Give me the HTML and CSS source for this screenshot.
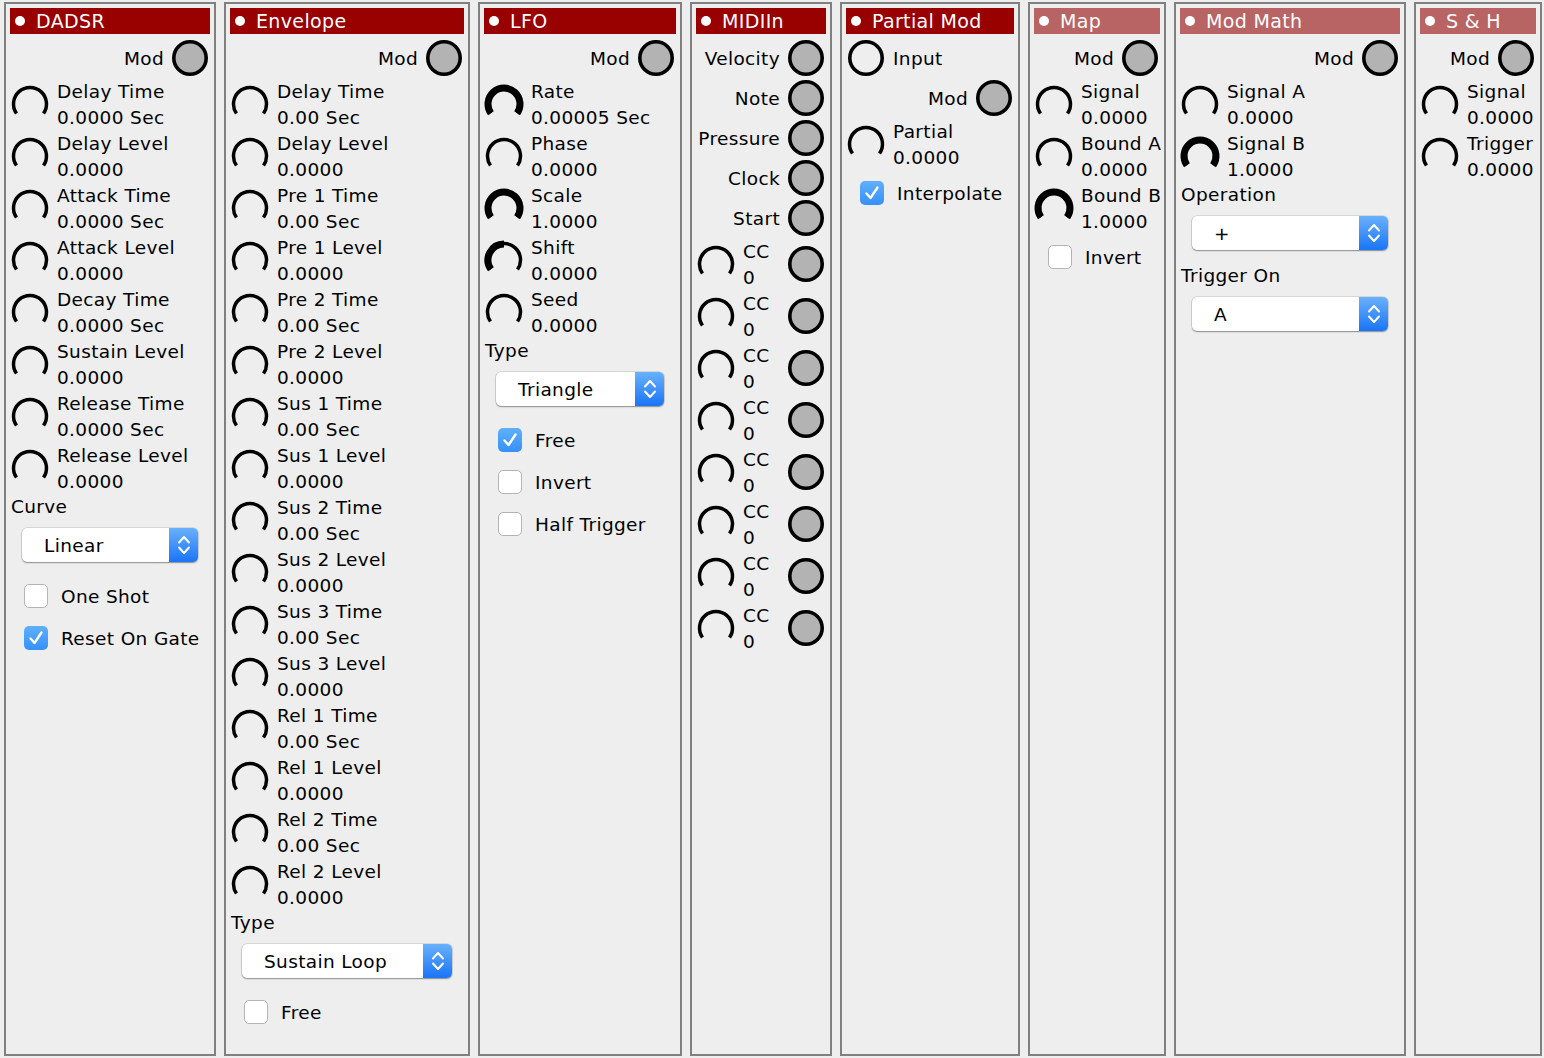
FILE: index.html
```html
<!DOCTYPE html>
<html>
<head>
<meta charset="utf-8">
<link rel="stylesheet" href="styles.css">
</head>
<body>
<svg class="defs" width="0" height="0">
  <defs>
    <symbol id="k0" viewBox="0 0 36 36" overflow="visible">
      <path d="M4.49 27.47 A16.5 16.5 0 1 1 31.51 27.47" fill="none" stroke="#000" stroke-width="3.5"/>
    </symbol>
    <symbol id="k1" viewBox="0 0 36 36" overflow="visible">
      <path d="M4.49 27.47 A16.5 16.5 0 1 1 31.51 27.47" fill="none" stroke="#000" stroke-width="3.5"/>
      <path d="M4.89 27.18 A16 16 0 1 1 31.11 27.18" fill="none" stroke="#000" stroke-width="7"/>
    </symbol>
    <symbol id="kh" viewBox="0 0 36 36" overflow="visible">
      <path d="M4.49 27.47 A16.5 16.5 0 1 1 31.51 27.47" fill="none" stroke="#000" stroke-width="3.5"/>
      <path d="M4.89 27.18 A16 16 0 0 1 18 2" fill="none" stroke="#000" stroke-width="7"/>
    </symbol>
    <symbol id="jk" viewBox="0 0 36 36">
      <circle cx="18" cy="18" r="16.2" fill="#b3b3b3" stroke="#000" stroke-width="3.6"/>
    </symbol>
    <symbol id="jo" viewBox="0 0 36 36">
      <circle cx="18" cy="18" r="16.2" fill="none" stroke="#000" stroke-width="3.6"/>
    </symbol>
    <symbol id="chev" viewBox="0 0 14 24">
      <path d="M2 9.5 L7 4 L12 9.5 M2 14.5 L7 20 L12 14.5" fill="none" stroke="#fff" stroke-width="2" stroke-linecap="round" stroke-linejoin="round"/>
    </symbol>
    <symbol id="tick" viewBox="0 0 24 24">
      <path d="M6.5 12.5 L10.5 17 L17.5 6.5" fill="none" stroke="#fff" stroke-width="2.4" stroke-linecap="round" stroke-linejoin="round"/>
    </symbol>
  </defs>
</svg>

<div class="panel w-dadsr">
  <div class="head"><span class="dot"></span>DADSR</div>
  <div class="modrow"><span>Mod</span><svg class="jack"><use href="#jk"/></svg></div>
  <div class="krow"><svg class="knob"><use href="#k0"/></svg><div class="kl"><div>Delay Time</div><div>0.0000 Sec</div></div></div>
  <div class="krow"><svg class="knob"><use href="#k0"/></svg><div class="kl"><div>Delay Level</div><div>0.0000</div></div></div>
  <div class="krow"><svg class="knob"><use href="#k0"/></svg><div class="kl"><div>Attack Time</div><div>0.0000 Sec</div></div></div>
  <div class="krow"><svg class="knob"><use href="#k0"/></svg><div class="kl"><div>Attack Level</div><div>0.0000</div></div></div>
  <div class="krow"><svg class="knob"><use href="#k0"/></svg><div class="kl"><div>Decay Time</div><div>0.0000 Sec</div></div></div>
  <div class="krow"><svg class="knob"><use href="#k0"/></svg><div class="kl"><div>Sustain Level</div><div>0.0000</div></div></div>
  <div class="krow"><svg class="knob"><use href="#k0"/></svg><div class="kl"><div>Release Time</div><div>0.0000 Sec</div></div></div>
  <div class="krow"><svg class="knob"><use href="#k0"/></svg><div class="kl"><div>Release Level</div><div>0.0000</div></div></div>
  <div class="label">Curve</div>
  <div class="select"><span class="sv">Linear</span><span class="sb"><svg class="chev"><use href="#chev"/></svg></span></div>
  <div class="cbrow"><span class="cb"></span><span>One Shot</span></div>
  <div class="cbrow"><span class="cb on"><svg class="tick"><use href="#tick"/></svg></span><span>Reset On Gate</span></div>
</div>

<div class="panel w-env">
  <div class="head"><span class="dot"></span>Envelope</div>
  <div class="modrow"><span>Mod</span><svg class="jack"><use href="#jk"/></svg></div>
  <div class="krow"><svg class="knob"><use href="#k0"/></svg><div class="kl"><div>Delay Time</div><div>0.00 Sec</div></div></div>
  <div class="krow"><svg class="knob"><use href="#k0"/></svg><div class="kl"><div>Delay Level</div><div>0.0000</div></div></div>
  <div class="krow"><svg class="knob"><use href="#k0"/></svg><div class="kl"><div>Pre 1 Time</div><div>0.00 Sec</div></div></div>
  <div class="krow"><svg class="knob"><use href="#k0"/></svg><div class="kl"><div>Pre 1 Level</div><div>0.0000</div></div></div>
  <div class="krow"><svg class="knob"><use href="#k0"/></svg><div class="kl"><div>Pre 2 Time</div><div>0.00 Sec</div></div></div>
  <div class="krow"><svg class="knob"><use href="#k0"/></svg><div class="kl"><div>Pre 2 Level</div><div>0.0000</div></div></div>
  <div class="krow"><svg class="knob"><use href="#k0"/></svg><div class="kl"><div>Sus 1 Time</div><div>0.00 Sec</div></div></div>
  <div class="krow"><svg class="knob"><use href="#k0"/></svg><div class="kl"><div>Sus 1 Level</div><div>0.0000</div></div></div>
  <div class="krow"><svg class="knob"><use href="#k0"/></svg><div class="kl"><div>Sus 2 Time</div><div>0.00 Sec</div></div></div>
  <div class="krow"><svg class="knob"><use href="#k0"/></svg><div class="kl"><div>Sus 2 Level</div><div>0.0000</div></div></div>
  <div class="krow"><svg class="knob"><use href="#k0"/></svg><div class="kl"><div>Sus 3 Time</div><div>0.00 Sec</div></div></div>
  <div class="krow"><svg class="knob"><use href="#k0"/></svg><div class="kl"><div>Sus 3 Level</div><div>0.0000</div></div></div>
  <div class="krow"><svg class="knob"><use href="#k0"/></svg><div class="kl"><div>Rel 1 Time</div><div>0.00 Sec</div></div></div>
  <div class="krow"><svg class="knob"><use href="#k0"/></svg><div class="kl"><div>Rel 1 Level</div><div>0.0000</div></div></div>
  <div class="krow"><svg class="knob"><use href="#k0"/></svg><div class="kl"><div>Rel 2 Time</div><div>0.00 Sec</div></div></div>
  <div class="krow"><svg class="knob"><use href="#k0"/></svg><div class="kl"><div>Rel 2 Level</div><div>0.0000</div></div></div>
  <div class="label">Type</div>
  <div class="select"><span class="sv">Sustain Loop</span><span class="sb"><svg class="chev"><use href="#chev"/></svg></span></div>
  <div class="cbrow"><span class="cb"></span><span>Free</span></div>
</div>

<div class="panel w-lfo">
  <div class="head"><span class="dot"></span>LFO</div>
  <div class="modrow"><span>Mod</span><svg class="jack"><use href="#jk"/></svg></div>
  <div class="krow"><svg class="knob"><use href="#k1"/></svg><div class="kl"><div>Rate</div><div>0.00005 Sec</div></div></div>
  <div class="krow"><svg class="knob"><use href="#k0"/></svg><div class="kl"><div>Phase</div><div>0.0000</div></div></div>
  <div class="krow"><svg class="knob"><use href="#k1"/></svg><div class="kl"><div>Scale</div><div>1.0000</div></div></div>
  <div class="krow"><svg class="knob"><use href="#kh"/></svg><div class="kl"><div>Shift</div><div>0.0000</div></div></div>
  <div class="krow"><svg class="knob"><use href="#k0"/></svg><div class="kl"><div>Seed</div><div>0.0000</div></div></div>
  <div class="label">Type</div>
  <div class="select"><span class="sv">Triangle</span><span class="sb"><svg class="chev"><use href="#chev"/></svg></span></div>
  <div class="cbrow"><span class="cb on"><svg class="tick"><use href="#tick"/></svg></span><span>Free</span></div>
  <div class="cbrow"><span class="cb"></span><span>Invert</span></div>
  <div class="cbrow"><span class="cb"></span><span>Half Trigger</span></div>
</div>

<div class="panel w-midi">
  <div class="head"><span class="dot"></span>MIDIIn</div>
  <div class="modrow"><span>Velocity</span><svg class="jack"><use href="#jk"/></svg></div>
  <div class="modrow"><span>Note</span><svg class="jack"><use href="#jk"/></svg></div>
  <div class="modrow"><span>Pressure</span><svg class="jack"><use href="#jk"/></svg></div>
  <div class="modrow"><span>Clock</span><svg class="jack"><use href="#jk"/></svg></div>
  <div class="modrow"><span>Start</span><svg class="jack"><use href="#jk"/></svg></div>
  <div class="krow"><svg class="knob"><use href="#k0"/></svg><div class="kl"><div>CC</div><div>0</div></div><svg class="jack end"><use href="#jk"/></svg></div>
  <div class="krow"><svg class="knob"><use href="#k0"/></svg><div class="kl"><div>CC</div><div>0</div></div><svg class="jack end"><use href="#jk"/></svg></div>
  <div class="krow"><svg class="knob"><use href="#k0"/></svg><div class="kl"><div>CC</div><div>0</div></div><svg class="jack end"><use href="#jk"/></svg></div>
  <div class="krow"><svg class="knob"><use href="#k0"/></svg><div class="kl"><div>CC</div><div>0</div></div><svg class="jack end"><use href="#jk"/></svg></div>
  <div class="krow"><svg class="knob"><use href="#k0"/></svg><div class="kl"><div>CC</div><div>0</div></div><svg class="jack end"><use href="#jk"/></svg></div>
  <div class="krow"><svg class="knob"><use href="#k0"/></svg><div class="kl"><div>CC</div><div>0</div></div><svg class="jack end"><use href="#jk"/></svg></div>
  <div class="krow"><svg class="knob"><use href="#k0"/></svg><div class="kl"><div>CC</div><div>0</div></div><svg class="jack end"><use href="#jk"/></svg></div>
  <div class="krow"><svg class="knob"><use href="#k0"/></svg><div class="kl"><div>CC</div><div>0</div></div><svg class="jack end"><use href="#jk"/></svg></div>
</div>

<div class="panel w-pmod">
  <div class="head"><span class="dot"></span>Partial Mod</div>
  <div class="inrow"><svg class="jack"><use href="#jo"/></svg><span>Input</span></div>
  <div class="modrow"><span>Mod</span><svg class="jack"><use href="#jk"/></svg></div>
  <div class="krow"><svg class="knob"><use href="#k0"/></svg><div class="kl"><div>Partial</div><div>0.0000</div></div></div>
  <div class="cbrow tight"><span class="cb on"><svg class="tick"><use href="#tick"/></svg></span><span>Interpolate</span></div>
</div>

<div class="panel w-map">
  <div class="head dim"><span class="dot"></span>Map</div>
  <div class="modrow"><span>Mod</span><svg class="jack"><use href="#jk"/></svg></div>
  <div class="krow"><svg class="knob"><use href="#k0"/></svg><div class="kl"><div>Signal</div><div>0.0000</div></div></div>
  <div class="krow"><svg class="knob"><use href="#k0"/></svg><div class="kl"><div>Bound A</div><div>0.0000</div></div></div>
  <div class="krow"><svg class="knob"><use href="#k1"/></svg><div class="kl"><div>Bound B</div><div>1.0000</div></div></div>
  <div class="cbrow tight"><span class="cb"></span><span>Invert</span></div>
</div>

<div class="panel w-math">
  <div class="head dim"><span class="dot"></span>Mod Math</div>
  <div class="modrow"><span>Mod</span><svg class="jack"><use href="#jk"/></svg></div>
  <div class="krow"><svg class="knob"><use href="#k0"/></svg><div class="kl"><div>Signal A</div><div>0.0000</div></div></div>
  <div class="krow"><svg class="knob"><use href="#k1"/></svg><div class="kl"><div>Signal B</div><div>1.0000</div></div></div>
  <div class="label">Operation</div>
  <div class="select"><span class="sv">+</span><span class="sb"><svg class="chev"><use href="#chev"/></svg></span></div>
  <div class="label">Trigger On</div>
  <div class="select"><span class="sv">A</span><span class="sb"><svg class="chev"><use href="#chev"/></svg></span></div>
</div>

<div class="panel w-sh">
  <div class="head dim"><span class="dot"></span>S &amp; H</div>
  <div class="modrow"><span>Mod</span><svg class="jack"><use href="#jk"/></svg></div>
  <div class="krow"><svg class="knob"><use href="#k0"/></svg><div class="kl"><div>Signal</div><div>0.0000</div></div></div>
  <div class="krow"><svg class="knob"><use href="#k0"/></svg><div class="kl"><div>Trigger</div><div>0.0000</div></div></div>
</div>
</body>
</html>
```

FILE: styles.css
```css
html, body {
  margin: 0;
  background: #eeeeee;
}
body {
  display: flex;
  align-items: flex-start;
  gap: 8px;
  padding: 2px 0 0 4px;
  font-family: "DejaVu Sans", "Noto Sans", sans-serif;
  font-size: 18.5px;
  letter-spacing: 0.35px;
  color: #000;
  overflow: hidden;
  height: 1058px;
  box-sizing: border-box;
}
.defs {
  position: absolute;
  width: 0;
  height: 0;
}
.panel {
  box-sizing: border-box;
  height: 1054px;
  border: 2px solid #808080;
  background: #eeeeee;
  padding: 4px;
  display: flex;
  flex-direction: column;
  flex-shrink: 0;
}
.w-dadsr { width: 212px; }
.w-env { width: 246px; }
.w-lfo { width: 204px; }
.w-midi { width: 142px; }
.w-pmod { width: 180px; }
.w-map { width: 138px; }
.w-math { width: 232px; }
.w-sh { width: 128px; }

.head {
  height: 26px;
  background: #990000;
  color: #fff;
  display: flex;
  align-items: center;
  font-size: 19px;
  margin-bottom: 4px;
  white-space: nowrap;
}
.head.dim { background: #b96464; }
.dot {
  width: 10px;
  height: 10px;
  border-radius: 50%;
  background: #fff;
  margin-left: 5px;
  margin-right: 11px;
  flex-shrink: 0;
}

.modrow {
  height: 40px;
  display: flex;
  align-items: center;
  justify-content: flex-end;
  gap: 8px;
  white-space: nowrap;
}
.inrow {
  height: 40px;
  display: flex;
  align-items: center;
  gap: 9px;
}
.jack {
  width: 36px;
  height: 36px;
  flex-shrink: 0;
  margin-right: 2px;
}
.inrow .jack {
  margin-right: 0;
  margin-left: 2px;
}
.jack.end { margin-left: auto; }

.krow {
  height: 52px;
  display: flex;
  align-items: center;
}
.knob {
  width: 36px;
  height: 36px;
  margin-left: 2px;
  flex-shrink: 0;
  overflow: visible;
}
.kl {
  margin-left: 9px;
  padding-top: 2px;
  line-height: 26px;
  white-space: nowrap;
}

.label {
  height: 26px;
  line-height: 26px;
  margin-left: 1px;
}
.select {
  height: 34px;
  margin: 8px 12px 13px;
  box-sizing: border-box;
  background: #fff;
  border-radius: 5px;
  box-shadow: 0 0 0 0.5px rgba(0,0,0,0.18), 0 1px 1.5px rgba(0,0,0,0.35);
  display: flex;
  align-items: center;
  overflow: hidden;
}
.sv {
  flex: 1;
  padding-left: 22px;
  white-space: nowrap;
}
.sb {
  width: 29px;
  height: 100%;
  background: linear-gradient(#69b1fd, #1a74f6);
  display: flex;
  align-items: center;
  justify-content: center;
}
.chev {
  width: 14px;
  height: 24px;
}

.cbrow {
  height: 42px;
  display: flex;
  align-items: center;
  white-space: nowrap;
}
.cbrow.tight { margin-top: 2px; }
.cb {
  width: 24px;
  height: 24px;
  box-sizing: border-box;
  margin-left: 14px;
  margin-right: 13px;
  border-radius: 5px;
  background: #fff;
  border: 1px solid #b4b4b4;
  flex-shrink: 0;
  display: flex;
}
.cb.on {
  border: none;
  background: linear-gradient(#5fb0fd, #3590f8);
}
.tick {
  width: 24px;
  height: 24px;
}
```
